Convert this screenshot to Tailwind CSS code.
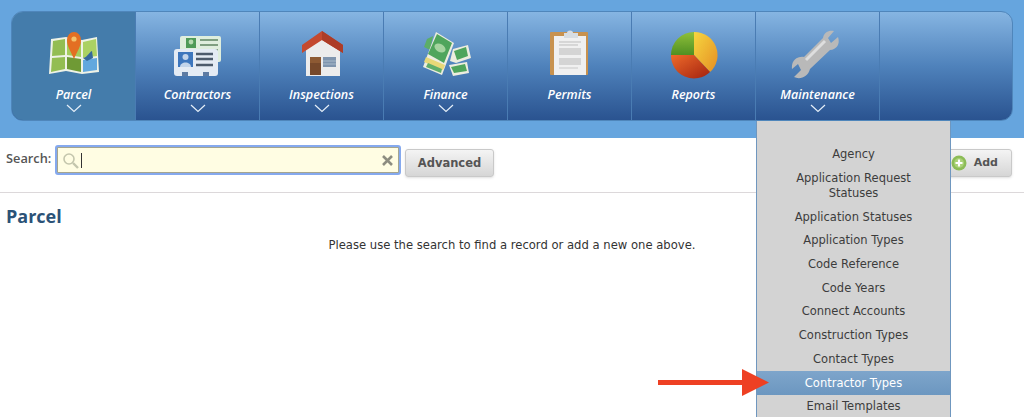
<!DOCTYPE html>
<html lang="en">
  <head>
    <meta charset="UTF-8" />
    <meta name="viewport" content="width=device-width, initial-scale=1.0" />
    <script src="https://cdn.jsdelivr.net/npm/@tailwindcss/browser@4"></script>
    <title>Parcel</title>
  </head>

  <body class="relative h-[417px] overflow-hidden bg-white font-['DejaVu_Sans',sans-serif]">
    <!-- Section Nav -->
    <header class="h-[138px] bg-[#66a5de] px-[11px] pt-[11px]">
      <nav class="flex h-[110px] w-[1002px] overflow-hidden rounded-[12px] border border-[#4f86bb] bg-gradient-to-b from-[#86b5e2] via-[#4f82bb] to-[#2a5390]">
        <!-- Parcel -->
        <a href="#" class="flex w-[123px] flex-col items-center bg-[#447cab] pt-[16px] text-white">
          <svg class="blur-[0.3px]" width="60" height="52" viewBox="0 0 60 52">
            <path d="M7 11 L22 9 L38 12 L53 9 L55 44 L38 46 L22 43 L5 46 Z" fill="#eef2e6" />
            <path d="M9 13 L21 11 L21 27 L8 28 Z M8 30 L21 29 L21 41 L7 44 Z" fill="#93bd52" />
            <path d="M23 11 L37 14 L37 29 L23 27 Z" fill="#a4cc5c" />
            <path d="M23 29 L37 31 L37 44 L23 41 Z" fill="#6f9a35" />
            <path d="M39 14 L52 11 L53 28 L39 30 Z" fill="#abd163" />
            <path d="M39 32 L53 30 L53 42 L39 44 Z" fill="#62a8de" />
            <path d="M39 30 C44 29 45 24 48 23 L49 30 L43 33 Z" fill="#35689c" />
            <path d="M30 31 C26 22 23 18 23 12 A7 8 0 0 1 37 12 C37 18 34 22 30 31 Z" fill="#e36f23" />
            <circle cx="30" cy="11" r="2.6" fill="#f3c26b" />
          </svg>
          <span class="mt-[7px] text-[12.5px] leading-4 font-['Open_Sans',sans-serif] font-semibold italic">Parcel</span>
          <svg class="mt-[1px]" width="16" height="9" viewBox="0 0 16 9" fill="none" stroke="#e4eef8" stroke-width="1.2"><path d="M1 1 L8 7.5 L15 1" /></svg>
        </a>
        <!-- Contractors -->
        <a href="#" class="flex w-[124px] flex-col items-center border-l border-[#4a7cb3] pt-[16px] text-white">
          <svg class="blur-[0.3px]" width="60" height="52" viewBox="0 0 60 52">
            <rect x="12" y="8" width="41" height="26" rx="2" fill="#dfeedd" />
            <rect x="18" y="10" width="10" height="10" fill="#4f9a58" />
            <circle cx="23" cy="14" r="2.4" fill="#b5d9b0" />
            <path d="M32 12 H50 M32 17 H50 M32 22 H50" stroke="#7f9f80" stroke-width="2" />
            <rect x="6" y="21" width="44" height="27" rx="3" fill="#e4ebf4" />
            <rect x="10" y="24" width="15" height="15" fill="#3d76bd" />
            <circle cx="17.5" cy="29" r="3" fill="#c2d4ea" />
            <path d="M12 39 C12 33 23 33 23 39 Z" fill="#c2d4ea" />
            <path d="M28 26 H45 M28 31 H45 M28 37 H45" stroke="#4d5b6c" stroke-width="2.4" />
            <rect x="14" y="44" width="6" height="4" fill="#5d7ba3" />
            <rect x="35" y="44" width="6" height="4" fill="#5d7ba3" />
          </svg>
          <span class="mt-[7px] text-[12.5px] leading-4 font-['Open_Sans',sans-serif] font-semibold italic">Contractors</span>
          <svg class="mt-[1px]" width="16" height="9" viewBox="0 0 16 9" fill="none" stroke="#e4eef8" stroke-width="1.2"><path d="M1 1 L8 7.5 L15 1" /></svg>
        </a>
        <!-- Inspections -->
        <a href="#" class="flex w-[124px] flex-col items-center border-l border-[#4a7cb3] pt-[16px] text-white">
          <svg class="blur-[0.3px]" width="60" height="52" viewBox="0 0 60 52">
            <path d="M14 20 L30 9 L48 20 V48 H14 Z" fill="#ececec" />
            <path d="M10 17 L30 3 L51 17 V25 L30 12 L10 25 Z" fill="#c4492f" />
            <path d="M30 3 L51 17 V25 L30 12 Z" fill="#ad3c27" />
            <rect x="18" y="29" width="11" height="18" fill="#77492a" />
            <rect x="18" y="29" width="11" height="6" fill="#8d5a33" />
            <rect x="31" y="29" width="13" height="10" fill="#7f95ae" />
            <path d="M31 33 H44 M31 36 H44" stroke="#a9bacb" />
          </svg>
          <span class="mt-[7px] text-[12.5px] leading-4 font-['Open_Sans',sans-serif] font-semibold italic">Inspections</span>
          <svg class="mt-[1px]" width="16" height="9" viewBox="0 0 16 9" fill="none" stroke="#e4eef8" stroke-width="1.2"><path d="M1 1 L8 7.5 L15 1" /></svg>
        </a>
        <!-- Finance -->
        <a href="#" class="flex w-[124px] flex-col items-center border-l border-[#4a7cb3] pt-[16px] text-white">
          <svg class="blur-[0.3px]" width="60" height="52" viewBox="0 0 60 52">
            <path d="M11 11 L17 8 L14 22 L8 19 Z" fill="#5cae68" />
            <path d="M20 4 L38 15 L26 47 L7 39 Z" fill="#ededdf" />
            <path d="M21 6 L36 15 L28 35 L12 26 Z" fill="#4fa55c" />
            <ellipse cx="24" cy="20" rx="6" ry="4" fill="#a5d49f" transform="rotate(30 24 20)" />
            <path d="M10 29 L29 37 L27 42 L8 34 Z" fill="#e8d878" />
            <path d="M12 35 L26 41 L25 45 L10 39 Z" fill="#5fae6b" />
            <path d="M37 21 L52 17 L55 30 L40 35 L34 33 Z" fill="#ededdf" />
            <path d="M38 23 L50 19 L52 28 L41 32 Z" fill="#4fa55c" />
            <path d="M33 37 L51 34 L53 45 L37 48 Z" fill="#ededdf" />
            <path d="M35 39 L49 36 L51 43 L38 45 Z" fill="#4fa55c" />
          </svg>
          <span class="mt-[7px] text-[12.5px] leading-4 font-['Open_Sans',sans-serif] font-semibold italic">Finance</span>
          <svg class="mt-[1px]" width="16" height="9" viewBox="0 0 16 9" fill="none" stroke="#e4eef8" stroke-width="1.2"><path d="M1 1 L8 7.5 L15 1" /></svg>
        </a>
        <!-- Permits -->
        <a href="#" class="flex w-[124px] flex-col items-center border-l border-[#4a7cb3] pt-[16px] text-white">
          <svg class="blur-[0.3px]" width="60" height="52" viewBox="0 0 60 52">
            <rect x="10" y="4" width="38" height="43" rx="1" fill="#c8924f" />
            <rect x="14" y="8" width="32" height="39" fill="#f0f0f0" />
            <path d="M24 9 V5 H27 A3 2.5 0 0 1 33 5 H38 V10 H24 Z" fill="#d8dde2" />
            <path d="M19 14 H41 M19 17 H38" stroke="#bdbdbd" />
            <rect x="19" y="20" width="22" height="7" fill="#d4d4d4" />
            <rect x="19" y="30" width="22" height="7" fill="#d4d4d4" />
            <path d="M19 40 H38" stroke="#c8c8c8" />
          </svg>
          <span class="mt-[7px] text-[12.5px] leading-4 font-['Open_Sans',sans-serif] font-semibold italic">Permits</span>
        </a>
        <!-- Reports -->
        <a href="#" class="flex w-[124px] flex-col items-center border-l border-[#4a7cb3] pt-[16px] text-white">
          <svg class="blur-[0.3px]" width="60" height="52" viewBox="0 0 60 52">
            <defs>
              <linearGradient id="pieYellow" x1="0" y1="0" x2="1" y2="1"><stop offset="0" stop-color="#f6d63f" /><stop offset="1" stop-color="#e58f24" /></linearGradient>
              <linearGradient id="pieRed" x1="0" y1="0" x2="1" y2="1"><stop offset="0" stop-color="#ee6a2a" /><stop offset="1" stop-color="#a3220f" /></linearGradient>
              <linearGradient id="pieGreen" x1="0" y1="0" x2="0" y2="1"><stop offset="0" stop-color="#8fc03a" /><stop offset="1" stop-color="#4f8f22" /></linearGradient>
            </defs>
            <path d="M30 27 L30 4 A23 23 0 0 1 46 44 Z" fill="url(#pieYellow)" />
            <path d="M30 27 L30 4 A23 23 0 0 0 7 27 Z" fill="url(#pieGreen)" />
            <path d="M30 27 L7 27 A23 23 0 0 0 46 44 Z" fill="url(#pieRed)" />
          </svg>
          <span class="mt-[7px] text-[12.5px] leading-4 font-['Open_Sans',sans-serif] font-semibold italic">Reports</span>
        </a>
        <!-- Maintenance -->
        <a href="#" class="flex w-[124px] flex-col items-center border-l border-[#4a7cb3] pt-[16px] text-white">
          <svg class="blur-[0.3px]" width="60" height="52" viewBox="0 0 60 52">
            <path d="M46 3 L40 10 L43 15 L50 9 C52 15 50 21 42 22 L22 41 C20 49 12 52 6 49 L13 42 L10 36 L4 41 C3 33 9 28 16 29 L35 10 C36 4 41 2 46 3 Z" fill="#b9b9b9" />
            <path d="M37 13 L18 32" stroke="#dedede" stroke-width="3" />
          </svg>
          <span class="mt-[7px] text-[12.5px] leading-4 font-['Open_Sans',sans-serif] font-semibold italic">Maintenance</span>
          <svg class="mt-[1px]" width="16" height="9" viewBox="0 0 16 9" fill="none" stroke="#e4eef8" stroke-width="1.2"><path d="M1 1 L8 7.5 L15 1" /></svg>
        </a>
        <div class="flex-1 border-l border-[#4a7cb3]"></div>
      </nav>
    </header>

    <!-- Section Search -->
    <section class="flex h-[55px] items-start justify-between border-b border-[#dcd8da] pl-[6px] pr-[12px] pt-[7px]">
      <div class="flex items-start">
        <label class="mt-[5px] w-[49px] text-[12.8px] leading-4 font-['Open_Sans',sans-serif] font-semibold text-[#555]">Search:</label>
        <div class="flex h-[30px] w-[346px] items-center rounded-[3px] border-[3px] border-[#85a9ee] bg-[#fffde3] px-[3px] outline outline-[#a5a58f] -outline-offset-[3px]">
          <svg width="18" height="18" viewBox="0 0 18 18" fill="none" stroke="#c4c6ad" stroke-width="1.6"><circle cx="8" cy="8" r="5" /><path d="M12 12 L17 17" stroke-width="2.4" /></svg>
          <span class="ml-[2px] h-[15px] w-px bg-[#333]"></span>
          <svg class="ml-auto mr-[2px]" width="11" height="11" viewBox="0 0 11 11" stroke="#8d8d80" stroke-width="2.6"><path d="M1 1 L10 10 M10 1 L1 10" /></svg>
        </div>
        <button class="ml-[4px] mt-[4px] h-[28px] w-[89px] rounded-[3px] border border-[#c9c9c9] bg-gradient-to-b from-[#f4f4f4] to-[#d6d6d6] pt-[1px] text-[11.5px] font-bold text-[#555] shadow-sm">Advanced</button>
      </div>
      <button class="mt-[4px] flex h-[28px] w-[67px] items-center justify-end rounded-[3px] border border-[#c9c9c9] bg-gradient-to-b from-[#f4f4f4] to-[#d6d6d6] pr-[13px] pt-[1px] text-[11px] font-bold text-[#555] shadow-sm">Add</button>
    </section>

    <!-- Section Content -->
    <main class="px-[6px]">
      <h1 class="mt-[11px] text-[18px] leading-6 font-['Open_Sans',sans-serif] font-bold text-[#2b5277]">Parcel</h1>
      <p class="mt-[9px] text-center text-[11.6px] leading-4 text-[#333]">Please use the search to find a record or add a new one above.</p>
    </main>

    <!-- Add icon, right beside the edge of the menu -->
    <svg class="absolute left-[951px] top-[155px]" width="16" height="16" viewBox="0 0 16 16">
      <circle cx="8" cy="8" r="7.5" fill="#8cbc57" />
      <circle cx="8" cy="8" r="5" fill="#a9d176" />
      <path d="M8 4.5 V11.5 M4.5 8 H11.5" stroke="#fff" stroke-width="2.2" />
    </svg>

    <!-- Maintenance dropdown -->
    <ul class="absolute left-[756px] top-[121px] w-[195px] border-x border-[#6f97bf] bg-[#d3d3d3] pt-[22px] text-center text-[11.5px] leading-[15px] text-[#3c3c3c]">
      <li class="px-2 py-[4.35px]">Agency</li>
      <li class="px-2 py-[4.35px]">Application Request<br />Statuses</li>
      <li class="px-2 py-[4.35px]">Application Statuses</li>
      <li class="px-2 py-[4.35px]">Application Types</li>
      <li class="px-2 py-[4.35px]">Code Reference</li>
      <li class="px-2 py-[4.35px]">Code Years</li>
      <li class="px-2 py-[4.35px]">Connect Accounts</li>
      <li class="px-2 py-[4.35px]">Construction Types</li>
      <li class="px-2 py-[4.35px]">Contact Types</li>
      <li class="bg-gradient-to-b from-[#7ea5cb] to-[#6c97c0] px-2 py-[4.35px] text-white">Contractor Types</li>
      <li class="px-2 py-[4.35px]">Email Templates</li>
    </ul>

    <!-- Red arrow annotation -->
    <svg class="absolute left-[658px] top-[369px]" width="112" height="27" viewBox="0 0 112 27" fill="#ee4023">
      <rect x="0" y="11" width="85" height="5" />
      <path d="M84 0 L111 13.5 L84 27 Z" />
    </svg>
  </body>
</html>
